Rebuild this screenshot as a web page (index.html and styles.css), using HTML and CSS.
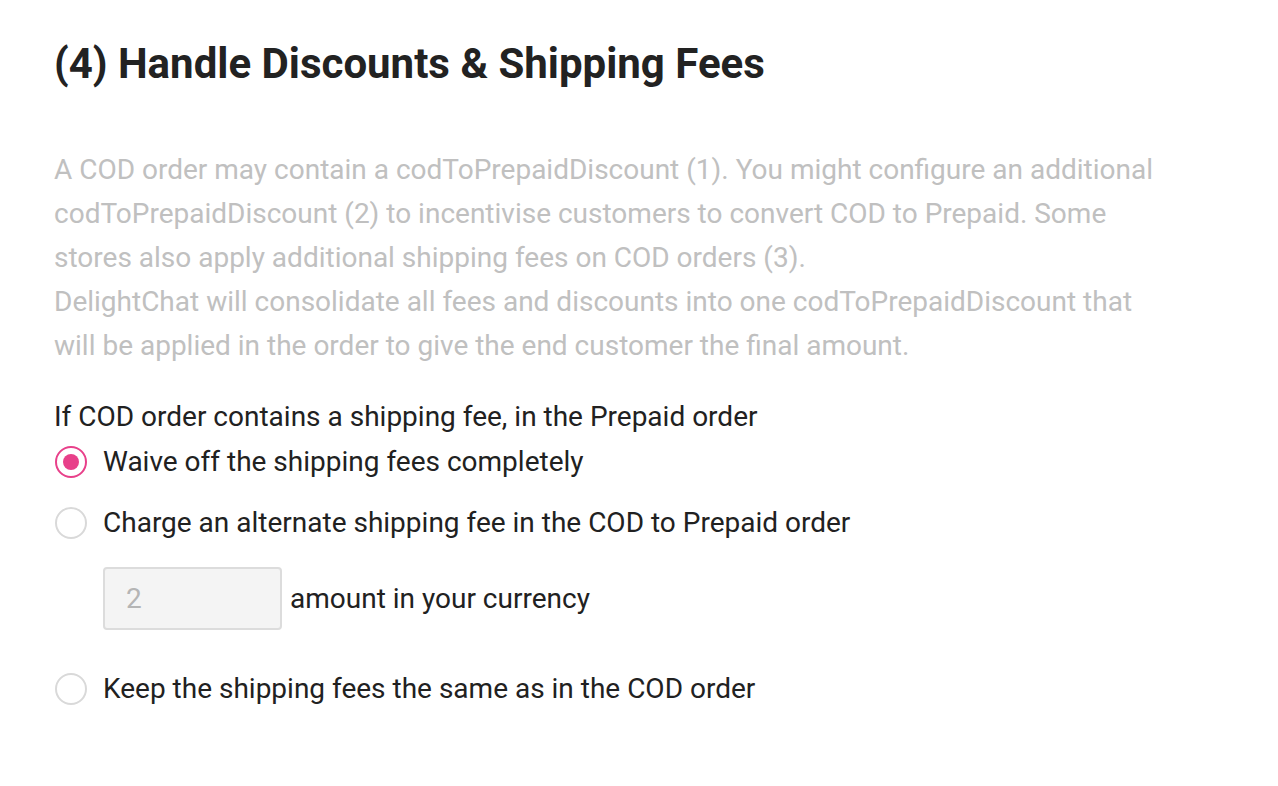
FILE: index.html
```html
<!DOCTYPE html>
<html lang="en">
<head>
    <meta charset="UTF-8">
    <meta name="viewport" content="width=device-width, initial-scale=1.0">
    <title>Handle Discounts &amp; Shipping Fees</title>
    <link rel="stylesheet" href="styles.css">
</head>
<body>
    <section class="step">
        <h2 class="step-title">(4) Handle Discounts &amp; Shipping Fees</h2>

        <p class="step-desc">
            A COD order may contain a codToPrepaidDiscount (1). You might configure an additional
            codToPrepaidDiscount (2) to incentivise customers to convert COD to Prepaid. Some
            stores also apply additional shipping fees on COD orders (3).<br>
            DelightChat will consolidate all fees and discounts into one codToPrepaidDiscount that
            will be applied in the order to give the end customer the final amount.
        </p>

        <div class="field">
            <div class="field-label">If COD order contains a shipping fee, in the Prepaid order</div>

            <label class="radio-row">
                <input type="radio" name="shipping" class="radio" checked>
                <span>Waive off the shipping fees completely</span>
            </label>

            <label class="radio-row">
                <input type="radio" name="shipping" class="radio">
                <span>Charge an alternate shipping fee in the COD to Prepaid order</span>
            </label>

            <div class="amount-row">
                <input type="text" class="amount-input" value="2" disabled>
                <span>amount in your currency</span>
            </div>

            <label class="radio-row">
                <input type="radio" name="shipping" class="radio">
                <span>Keep the shipping fees the same as in the COD order</span>
            </label>
        </div>
    </section>
</body>
</html>
```

FILE: styles.css
```css
body {
    margin: 0;
    background: #fff;
    font-family: Roboto, "Liberation Sans", sans-serif;
    color: #212121;
}

.step {
    padding: 39px 54px;
    width: 1115px;
}

.step-title {
    margin: 0;
    font-size: 42px;
    font-weight: 700;
    line-height: 50px;
    color: #222;
}

.step-desc {
    margin: 59px 0 0;
    font-size: 28px;
    line-height: 44px;
    color: #c0c0c0;
}

.field {
    margin-top: 33px;
}

.field-label {
    font-size: 28px;
    line-height: 32px;
    margin-bottom: 13px;
}

.radio-row {
    display: flex;
    align-items: center;
    gap: 16px;
    font-size: 28px;
    line-height: 32px;
    margin-bottom: 29px;
    cursor: pointer;
}

/* eigener Radio-Kreis */
.radio {
    appearance: none;
    margin: 0 0 0 1px;
    width: 32px;
    height: 32px;
    border: 2px solid #d9d9d9;
    border-radius: 50%;
    background: #fff;
    position: relative;
    flex-shrink: 0;
}

.radio:checked {
    border-color: #e8408a;
}

.radio:checked::after {
    content: "";
    position: absolute;
    left: 50%;
    top: 50%;
    width: 16px;
    height: 16px;
    border-radius: 50%;
    background: #e8408a;
    transform: translate(-50%, -50%);
}

.amount-row {
    display: flex;
    align-items: center;
    gap: 8px;
    margin: -1px 0 43px 49px;
    font-size: 28px;
}

.amount-input {
    width: 179px;
    height: 63px;
    box-sizing: border-box;
    padding: 0 21px;
    border: 2px solid #dcdcdc;
    border-radius: 4px;
    background: #f4f4f4;
    font-family: inherit;
    font-size: 28px;
    color: #b5b5b5;
}
```
